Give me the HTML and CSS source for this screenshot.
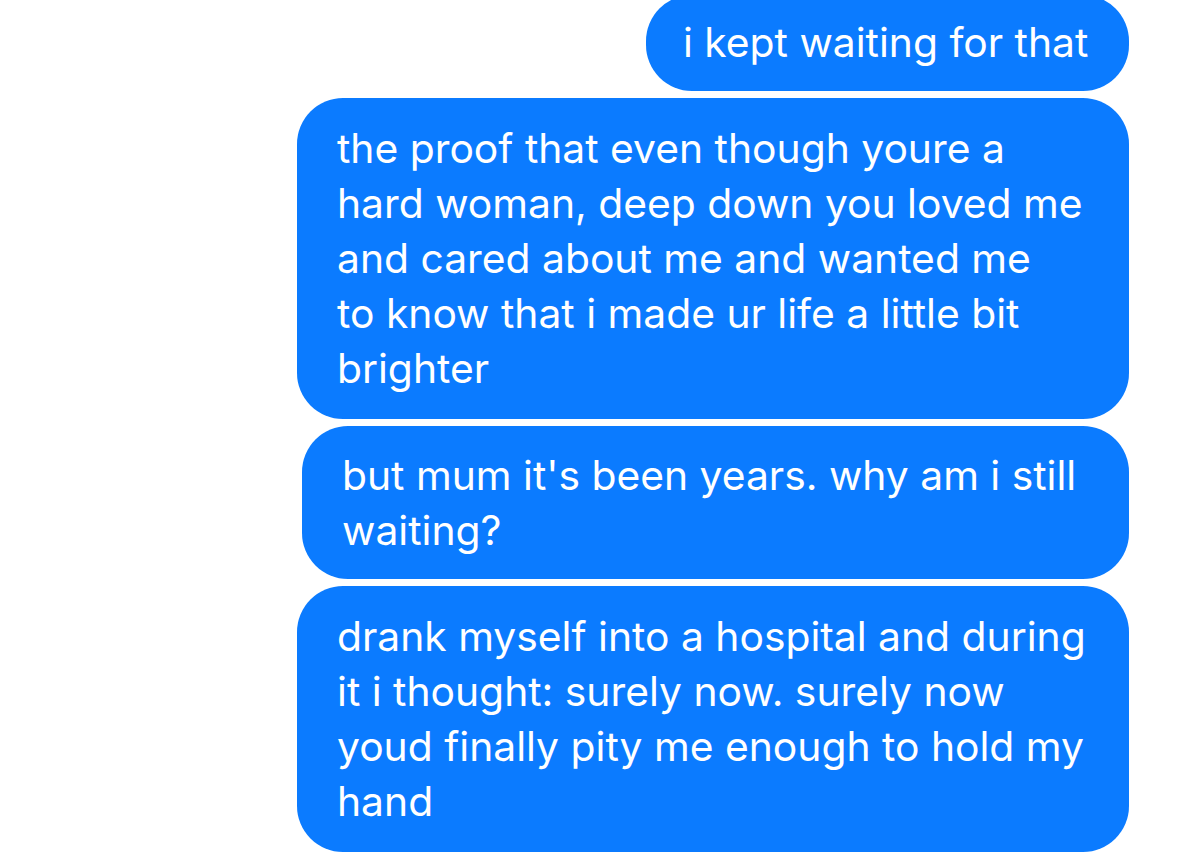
FILE: index.html
```html
<!DOCTYPE html>
<html lang="en">
<head>
<meta charset="utf-8">
<title>Messages</title>
<link rel="stylesheet" href="styles.css">
</head>
<body>
<main class="thread">
  <div class="bubble b1">i kept waiting for that</div>
  <div class="bubble b2">the proof that even though youre a<br>hard woman, deep down you loved me<br>and cared about me and wanted me<br>to know that i made ur life a little bit<br>brighter</div>
  <div class="bubble b3">but mum it's been years. why am i still<br>waiting?</div>
  <div class="bubble b4">drank myself into a hospital and during<br>it i thought: surely now. surely now<br>youd finally pity me enough to hold my<br>hand</div>
</main>
</body>
</html>
```
FILE: styles.css
```css
html, body {
  margin: 0;
  padding: 0;
  background: #ffffff;
}

body {
  width: 1200px;
  height: 852px;
  overflow: hidden;
}

.thread {
  display: flex;
  flex-direction: column;
  align-items: flex-end;
  gap: 7px;
  padding-right: 71px;
  margin-top: -5px;
}

.bubble {
  box-sizing: border-box;
  background: #0b7bff;
  color: #ffffff;
  font-family: Inter, "Noto Sans", sans-serif;
  font-size: 40.8px;
  line-height: 55px;
  border-radius: 46px;
  padding: 23px 40px;
  white-space: nowrap;
}

.b1 {
  width: 483px;
  padding: 20px 37px 21px;
}

.b2 {
  width: 832px;
}

.b3 {
  width: 827px;
  padding: 22px 40px 21px;
}

.b4 {
  width: 832px;
}
```
